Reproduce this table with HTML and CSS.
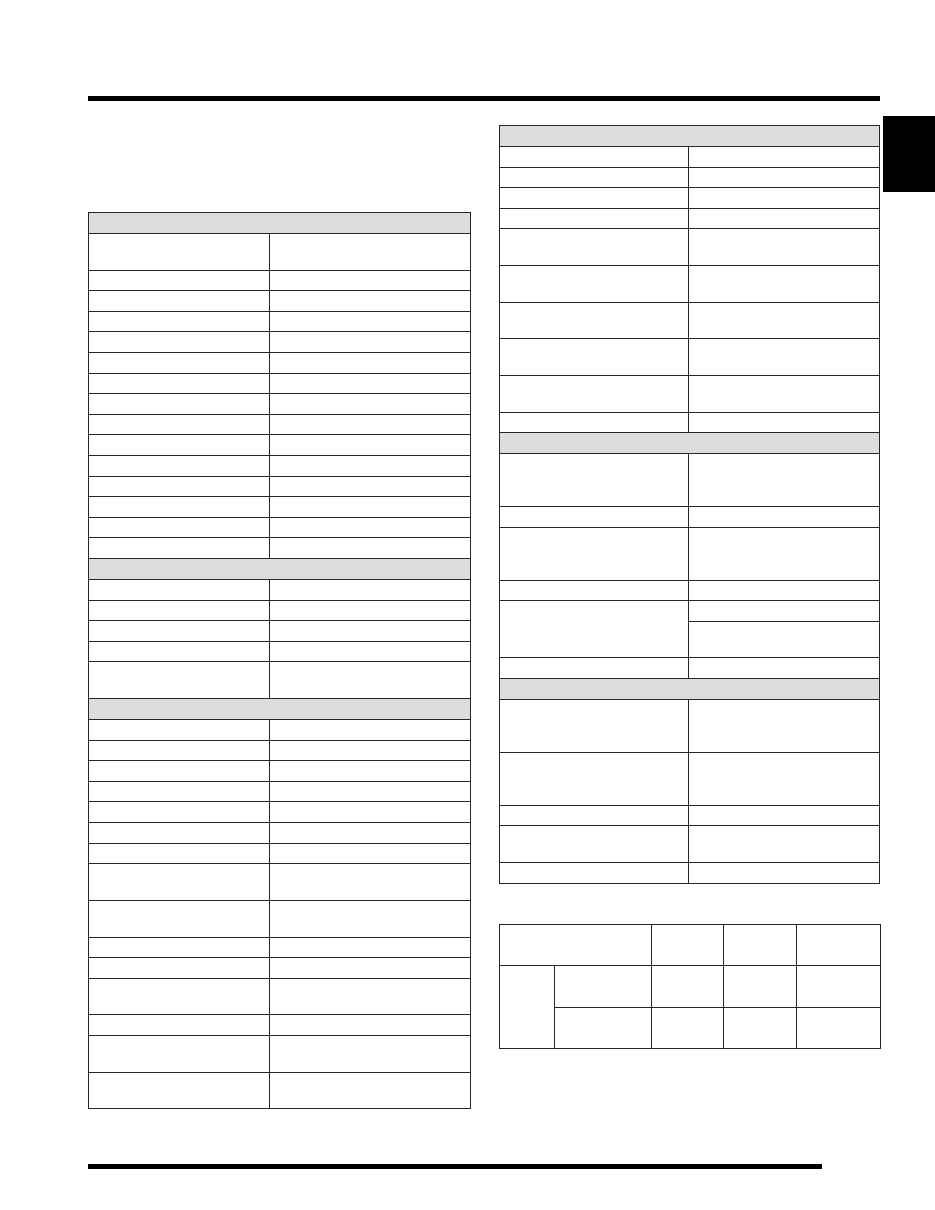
FILE: index.html
```html
<!DOCTYPE html>
<html>
<head>
<meta charset="utf-8">
<link rel="stylesheet" href="styles.css">
</head>
<body>
<div class="page">
  <div class="rule rule-top"></div>
  <div class="content">
    <div class="col-left">
      <table class="spec spec-left">
        <colgroup><col class="cl1"><col class="cl2"></colgroup>
        <tr class="h"><td colspan="2" class="head"></td></tr>
        <tr class="t"><td></td><td></td></tr>
        <tr class="n"><td></td><td></td></tr>
        <tr class="n"><td></td><td></td></tr>
        <tr class="n"><td></td><td></td></tr>
        <tr class="n"><td></td><td></td></tr>
        <tr class="n"><td></td><td></td></tr>
        <tr class="n"><td></td><td></td></tr>
        <tr class="n"><td></td><td></td></tr>
        <tr class="n"><td></td><td></td></tr>
        <tr class="n"><td></td><td></td></tr>
        <tr class="n"><td></td><td></td></tr>
        <tr class="n"><td></td><td></td></tr>
        <tr class="n"><td></td><td></td></tr>
        <tr class="n"><td></td><td></td></tr>
        <tr class="n"><td></td><td></td></tr>
        <tr class="h"><td colspan="2" class="head"></td></tr>
        <tr class="n"><td></td><td></td></tr>
        <tr class="n"><td></td><td></td></tr>
        <tr class="n"><td></td><td></td></tr>
        <tr class="n"><td></td><td></td></tr>
        <tr class="t"><td></td><td></td></tr>
        <tr class="h"><td colspan="2" class="head"></td></tr>
        <tr class="n"><td></td><td></td></tr>
        <tr class="n"><td></td><td></td></tr>
        <tr class="n"><td></td><td></td></tr>
        <tr class="n"><td></td><td></td></tr>
        <tr class="n"><td></td><td></td></tr>
        <tr class="n"><td></td><td></td></tr>
        <tr class="n"><td></td><td></td></tr>
        <tr class="t"><td></td><td></td></tr>
        <tr class="t"><td></td><td></td></tr>
        <tr class="n"><td></td><td></td></tr>
        <tr class="n"><td></td><td></td></tr>
        <tr class="t"><td></td><td></td></tr>
        <tr class="n"><td></td><td></td></tr>
        <tr class="t"><td></td><td></td></tr>
        <tr class="t"><td></td><td></td></tr>
      </table>
    </div>
    <div class="col-right">
      <table class="spec spec-right">
        <colgroup><col class="cr1"><col class="cr2"></colgroup>
        <tr class="h"><td colspan="2" class="head"></td></tr>
        <tr class="n"><td></td><td></td></tr>
        <tr class="n"><td></td><td></td></tr>
        <tr class="n"><td></td><td></td></tr>
        <tr class="n"><td></td><td></td></tr>
        <tr class="t"><td></td><td></td></tr>
        <tr class="t"><td></td><td></td></tr>
        <tr class="t"><td></td><td></td></tr>
        <tr class="t"><td></td><td></td></tr>
        <tr class="t"><td></td><td></td></tr>
        <tr class="n"><td></td><td></td></tr>
        <tr class="h"><td colspan="2" class="head"></td></tr>
        <tr class="x"><td></td><td></td></tr>
        <tr class="n"><td></td><td></td></tr>
        <tr class="x"><td></td><td></td></tr>
        <tr class="n"><td></td><td></td></tr>
        <tr class="n"><td rowspan="2"></td><td></td></tr>
        <tr class="t"><td></td></tr>
        <tr class="n"><td></td><td></td></tr>
        <tr class="h"><td colspan="2" class="head"></td></tr>
        <tr class="x"><td></td><td></td></tr>
        <tr class="x"><td></td><td></td></tr>
        <tr class="n"><td></td><td></td></tr>
        <tr class="t"><td></td><td></td></tr>
        <tr class="n"><td></td><td></td></tr>
      </table>
      <table class="spec grid">
        <colgroup><col class="g1"><col class="g2"><col class="g3"><col class="g4"><col class="g5"></colgroup>
        <tr class="g"><td colspan="2"></td><td></td><td></td><td></td></tr>
        <tr class="g"><td rowspan="2"></td><td></td><td></td><td></td><td></td></tr>
        <tr class="g"><td></td><td></td><td></td><td></td></tr>
      </table>
    </div>
    <div class="tab"></div>
  </div>
  <div class="rule rule-bottom"></div>
</div>
</body>
</html>
```

FILE: styles.css
```css
html, body {
  margin: 0;
  padding: 0;
  background: #ffffff;
}

body {
  font-family: "Liberation Sans", Arial, sans-serif;
  font-size: 12px;
  color: #000;
}

.page {
  width: 935px;
  height: 1210px;
  padding-left: 88px;
  box-sizing: border-box;
  overflow: hidden;
}

.rule {
  height: 5px;
  background: #000;
}

.rule-top {
  width: 792px;
  margin-top: 96px;
}

.rule-bottom {
  width: 734px;
  margin-top: 55px;
}

.content {
  display: flex;
  align-items: flex-start;
}

.col-left {
  width: 382px;
  margin-top: 111px;
}

.col-right {
  width: 380px;
  margin-left: 29px;
  margin-top: 24px;
}

.tab {
  width: 52px;
  height: 76px;
  background: #000;
  margin-left: 4px;
  margin-top: 15px;
}

.spec {
  width: 100%;
  border-collapse: collapse;
  table-layout: fixed;
}

.spec td {
  border: 1px solid #262626;
  padding: 0;
}

.spec td.head {
  background: #dddddd;
}

.cl1 { width: 181px; }
.cl2 { width: 201px; }
.cr1 { width: 189px; }
.cr2 { width: 191px; }

.spec tr.h { height: 21px; }
.spec tr.n { height: 20.6px; }
.spec tr.t { height: 36.7px; }
.spec tr.x { height: 52.8px; }

.grid {
  margin-top: 40.6px;
}

.g1 { width: 55px; }
.g2 { width: 96.7px; }
.g3 { width: 72.3px; }
.g4 { width: 72.7px; }
.g5 { width: 84px; }

.grid tr.g { height: 41.3px; }
```
